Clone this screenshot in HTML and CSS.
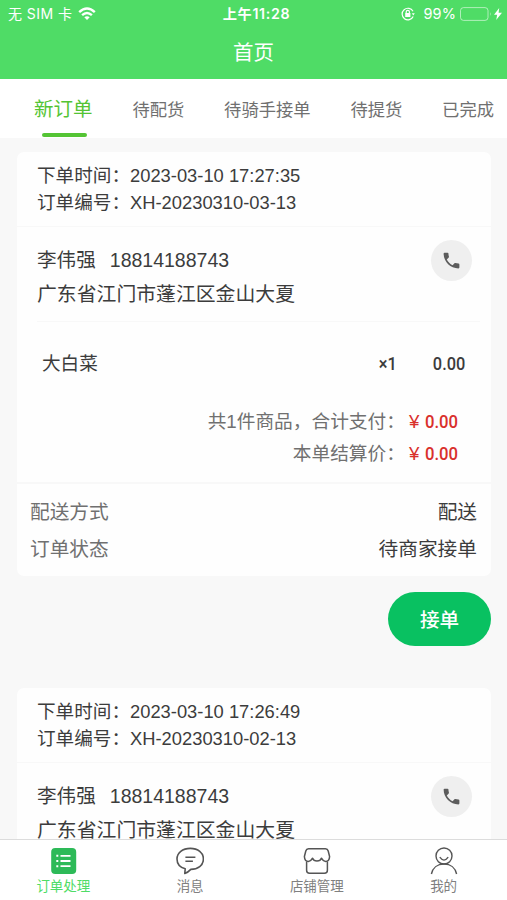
FILE: index.html
```html
<!DOCTYPE html>
<html lang="zh-CN">
<head>
    <meta charset="UTF-8">
    <meta name="viewport" content="width=device-width, initial-scale=1.0">
    <title>首页</title>
    <link rel="stylesheet" href="styles.css">
</head>
<body>
    <header class="header">
        <div class="status-bar">
            <div class="status-left">
                <span>无 SIM 卡</span>
                <svg class="wifi" width="18" height="14" viewBox="0 0 18 14" fill="none" stroke="#fff" stroke-width="2.4">
                    <path d="M1.2 5.2Q9 -2 16.8 5.2"/>
                    <path d="M4.1 8.2Q9 3.8 13.9 8.2"/>
                    <path d="M9 13L6.3 10.2Q9 8.2 11.7 10.2Z" fill="#fff" stroke="none"/>
                </svg>
            </div>
            <div class="status-time">上午11:28</div>
            <div class="status-right">
                <svg width="14" height="14" viewBox="0 0 14 14" fill="none" stroke="#fff" stroke-width="1.2">
                    <path d="M12 4.2A5.8 5.8 0 1 0 12.2 9.5"/>
                    <path d="M10.8 6.2h3l-1.5 2.2z" fill="#fff" stroke="none"/>
                    <rect x="4.2" y="6" width="5.2" height="4" fill="#fff" stroke="none"/>
                    <path d="M5.2 6V4.9a1.6 1.6 0 0 1 3.2 0V6"/>
                </svg>
                <span class="percent">99%</span>
                <svg width="32" height="14" viewBox="0 0 32 14">
                    <rect x=".5" y=".6" width="27.5" height="12.8" rx="3" fill="none" stroke="#fff" stroke-opacity=".55"/>
                    <path d="M30 5v4q1.6-2 0-4z" fill="#fff" fill-opacity=".55"/>
                </svg>
                <svg class="bolt" width="8" height="12" viewBox="0 0 8 12" fill="#fff">
                    <path d="M5.2 0L0 6.8h3.2L2.2 12L8 4.8H4.6z"/>
                </svg>
            </div>
        </div>
        <h1 class="title">首页</h1>
    </header>

    <nav class="tabs">
        <a class="tab active">新订单</a>
        <a class="tab">待配货</a>
        <a class="tab">待骑手接单</a>
        <a class="tab">待提货</a>
        <a class="tab">已完成</a>
    </nav>

    <main class="orders">
        <section class="order">
            <div class="card">
                <div class="order-info">
                    <p>下单时间：<span>2023-03-10 17:27:35</span></p>
                    <p>订单编号：<span>XH-20230310-03-13</span></p>
                </div>
                <div class="customer">
                    <div class="customer-text">
                        <p class="name">李伟强<span class="phone-number">18814188743</span></p>
                        <p>广东省江门市蓬江区金山大夏</p>
                    </div>
                    <div class="call">
                        <svg width="21" height="21" viewBox="0 0 24 24" fill="#5c5c5c">
                            <path d="M6.62 10.79c1.44 2.83 3.76 5.14 6.59 6.59l2.2-2.2c.27-.27.67-.36 1.02-.24 1.12.37 2.33.57 3.57.57.55 0 1 .45 1 1V20c0 .55-.45 1-1 1C10.61 21 3 13.39 3 4c0-.55.45-1 1-1h3.5c.55 0 1 .45 1 1 0 1.25.2 2.45.57 3.57.11.35.03.74-.25 1.02z"/>
                        </svg>
                    </div>
                </div>
                <div class="goods">
                    <span class="goods-name">大白菜</span>
                    <span class="num count">×1</span>
                    <span class="num">0.00</span>
                </div>
                <div class="totals">
                    <p>共1件商品，合计支付：<span class="yen">¥</span><span class="num price">0.00</span></p>
                    <p>本单结算价：<span class="yen">¥</span><span class="num price">0.00</span></p>
                </div>
                <dl class="delivery">
                    <div><dt>配送方式</dt><dd>配送</dd></div>
                    <div><dt>订单状态</dt><dd>待商家接单</dd></div>
                </dl>
            </div>
            <button class="accept">接单</button>
        </section>

        <section class="order">
            <div class="card">
                <div class="order-info">
                    <p>下单时间：<span>2023-03-10 17:26:49</span></p>
                    <p>订单编号：<span>XH-20230310-02-13</span></p>
                </div>
                <div class="customer">
                    <div class="customer-text">
                        <p class="name">李伟强<span class="phone-number">18814188743</span></p>
                        <p>广东省江门市蓬江区金山大夏</p>
                    </div>
                    <div class="call">
                        <svg width="21" height="21" viewBox="0 0 24 24" fill="#5c5c5c">
                            <path d="M6.62 10.79c1.44 2.83 3.76 5.14 6.59 6.59l2.2-2.2c.27-.27.67-.36 1.02-.24 1.12.37 2.33.57 3.57.57.55 0 1 .45 1 1V20c0 .55-.45 1-1 1C10.61 21 3 13.39 3 4c0-.55.45-1 1-1h3.5c.55 0 1 .45 1 1 0 1.25.2 2.45.57 3.57.11.35.03.74-.25 1.02z"/>
                        </svg>
                    </div>
                </div>
            </div>
        </section>
    </main>

    <footer class="tabbar">
        <a class="tabbar-item active">
            <svg width="28" height="28" viewBox="0 0 28 28" fill="none">
                <rect x="2.2" y="1" width="25" height="26" rx="4" fill="#2dba58"/>
                <path d="M11.5 8.8h10M11.5 14h10M11.5 19.2h10" stroke="#fff" stroke-width="1.8"/>
                <path d="M7.3 8.8h2M7.3 14h2M7.3 19.2h2" stroke="#fff" stroke-width="2"/>
            </svg>
            <span>订单处理</span>
        </a>
        <a class="tabbar-item">
            <svg width="28" height="28" viewBox="0 0 28 28" fill="none" stroke="#555" stroke-width="1.6">
                <path d="M9.2 21.8C4.2 20.4 1 16.6 1 12C1 5.8 6.6 1.4 14.3 1.4S27.4 5.8 27.4 12S21.8 22.4 14.8 22.4C13 24.4 11.2 25.6 8.8 26.4Z" stroke-linejoin="round"/>
                <path d="M9.4 10.2h10M9.4 14.2h7.5"/>
            </svg>
            <span>消息</span>
        </a>
        <a class="tabbar-item">
            <svg width="28" height="28" viewBox="0 0 28 28" fill="none" stroke="#555" stroke-width="1.5">
                <path d="M5.5 1.8h17Q24.6 1.8 25.2 4L26.6 9.5Q26.4 14.4 22.6 14.4Q20 14.2 18.4 11.2Q17.4 14 14 14Q10.6 14 9.6 11.2Q8 14.2 5.4 14.4Q1.6 14.4 1.4 9.5L2.8 4Q3.4 1.8 5.5 1.8Z" stroke-linejoin="round"/>
                <path d="M3.6 14.5V23.2Q3.6 26.2 6.6 26.2H21.4Q24.4 26.2 24.4 23.2V14.5"/>
            </svg>
            <span>店铺管理</span>
        </a>
        <a class="tabbar-item">
            <svg width="28" height="28" viewBox="0 0 28 28" fill="none" stroke="#555" stroke-width="1.4">
                <circle cx="14" cy="9" r="8"/>
                <path d="M9.8 10.2Q14 16 18.2 10.2"/>
                <path d="M1.4 27C2.6 20.8 7.5 17 14 17S25.4 20.8 26.6 27"/>
            </svg>
            <span>我的</span>
        </a>
    </footer>
</body>
</html>
```
FILE: styles.css
```css
:root {
    --header-green: #4fdc66;
    --active-green: #54c434;
    --button-green: #09c161;
    --background-color: #f8f8f8;
    --card-background: #fefefe;
    --text-color: #3c3c3c;
    --muted-color: #707070;
    --border-color: #f8f8f8;
    --price-color: #d9302c;
}

* {
    margin: 0;
    padding: 0;
    box-sizing: border-box;
}

body {
    display: flex;
    flex-direction: column;
    height: 100vh;
    overflow: hidden;
    font-family: "Liberation Sans", "Noto Sans CJK SC", sans-serif;
    background-color: var(--background-color);
    color: var(--text-color);
}

svg {
    display: block;
    flex: none;
}

/* Header */
.header {
    flex: none;
    height: 79px;
    background-color: var(--header-green);
    color: #fff;
}

.status-bar {
    display: grid;
    grid-template-columns: 1fr auto 1fr;
    align-items: center;
    height: 28px;
    padding: 0 5px 0 8px;
    font-family: Inter, "Noto Sans CJK SC", sans-serif;
    font-size: 14px;
    line-height: 28px;
}

.status-left,
.status-right {
    display: flex;
    align-items: center;
}

.status-left {
    letter-spacing: 0.45px;
}

.wifi {
    margin-left: 6px;
}

.status-time {
    padding-left: 3px;
    font-weight: 600;
    font-size: 14.2px;
    letter-spacing: 0.7px;
}

.status-right {
    justify-content: flex-end;
}

.percent {
    margin: 0 4px 0 8px;
    font-size: 14.5px;
    letter-spacing: 0.1px;
}

.bolt {
    margin-left: 2px;
}

.title {
    font-size: 20.5px;
    font-weight: 400;
    line-height: 49px;
    text-align: center;
}

/* Order tabs */
.tabs {
    flex: none;
    display: flex;
    justify-content: space-between;
    height: 59px;
    padding: 0 13px 0 34px;
    background-color: #fff;
    font-size: 17.3px;
    line-height: 62px;
    color: var(--muted-color);
    white-space: nowrap;
}

.tab.active {
    position: relative;
    font-size: 19.5px;
    line-height: 60px;
    color: var(--active-green);
}

.tab.active::after {
    content: '';
    position: absolute;
    left: 8px;
    bottom: 1px;
    width: 45px;
    height: 4px;
    border-radius: 2px;
    background-color: var(--active-green);
}

/* Orders */
.orders {
    flex: 1;
    min-height: 0;
    overflow: hidden;
    padding: 14px 16px 0 17px;
}

.order {
    display: flex;
    flex-direction: column;
    margin-bottom: 42px;
}

.card {
    background-color: var(--card-background);
    border-radius: 7px;
}

.order-info {
    height: 75px;
    padding: 10px 20px 0;
    border-bottom: 1px solid var(--border-color);
    font-size: 18.6px;
    line-height: 27px;
}

.order-info span {
    font-size: 18.35px;
}

.customer {
    display: flex;
    justify-content: space-between;
    height: 95px;
    margin: 0 11px 0 20px;
    border-bottom: 1px solid var(--border-color);
    font-size: 19.85px;
    line-height: 34px;
}

.customer-text {
    padding-top: 16px;
}

.name {
    font-size: 19.6px;
}

.phone-number {
    margin-left: 14px;
    font-size: 19.5px;
}

.call {
    display: flex;
    align-items: center;
    justify-content: center;
    width: 41px;
    height: 41px;
    margin: 13px 8px 0 0;
    border-radius: 50%;
    background-color: #efefef;
}

.goods {
    display: flex;
    align-items: center;
    height: 72px;
    padding: 12px 26px 0 25px;
    font-size: 18.6px;
    line-height: 28px;
}

.goods-name {
    flex: 1;
}

.num {
    display: inline-block;
    font-family: Roboto, sans-serif;
    font-size: 18.8px;
    font-weight: 500;
    transform: scaleX(0.87);
    transform-origin: right;
}

.count {
    margin-right: 31px;
}

.totals {
    height: 90px;
    padding: 12px 33px 0 0;
    border-bottom: 2px solid var(--border-color);
    font-size: 18.7px;
    line-height: 32px;
    text-align: right;
    color: var(--muted-color);
}

.yen {
    display: inline-block;
    width: 15px;
    padding-left: 4px;
    text-align: left;
    color: var(--price-color);
}

.price {
    font-size: 19.2px;
    color: var(--price-color);
}

.delivery {
    height: 92px;
    padding: 10px 14px 0 13px;
    font-size: 19.7px;
    line-height: 37px;
}

.delivery div {
    display: flex;
    justify-content: space-between;
}

.delivery dt {
    color: var(--muted-color);
}

.accept {
    align-self: flex-end;
    width: 103px;
    height: 54px;
    padding-bottom: 1px;
    margin-top: 16px;
    border: none;
    border-radius: 27px;
    background-color: var(--button-green);
    color: #fff;
    font-family: inherit;
    font-size: 19.6px;
    font-weight: 500;
}

/* Bottom bar */
.tabbar {
    flex: none;
    display: flex;
    height: 61px;
    border-top: 1px solid #dcdcdc;
    background-color: #fff;
}

.tabbar-item {
    flex: 1;
    display: flex;
    flex-direction: column;
    align-items: center;
    padding-top: 7px;
    font-size: 13.5px;
    line-height: 24px;
    color: #808080;
}

.tabbar-item.active {
    color: var(--header-green);
}
```
